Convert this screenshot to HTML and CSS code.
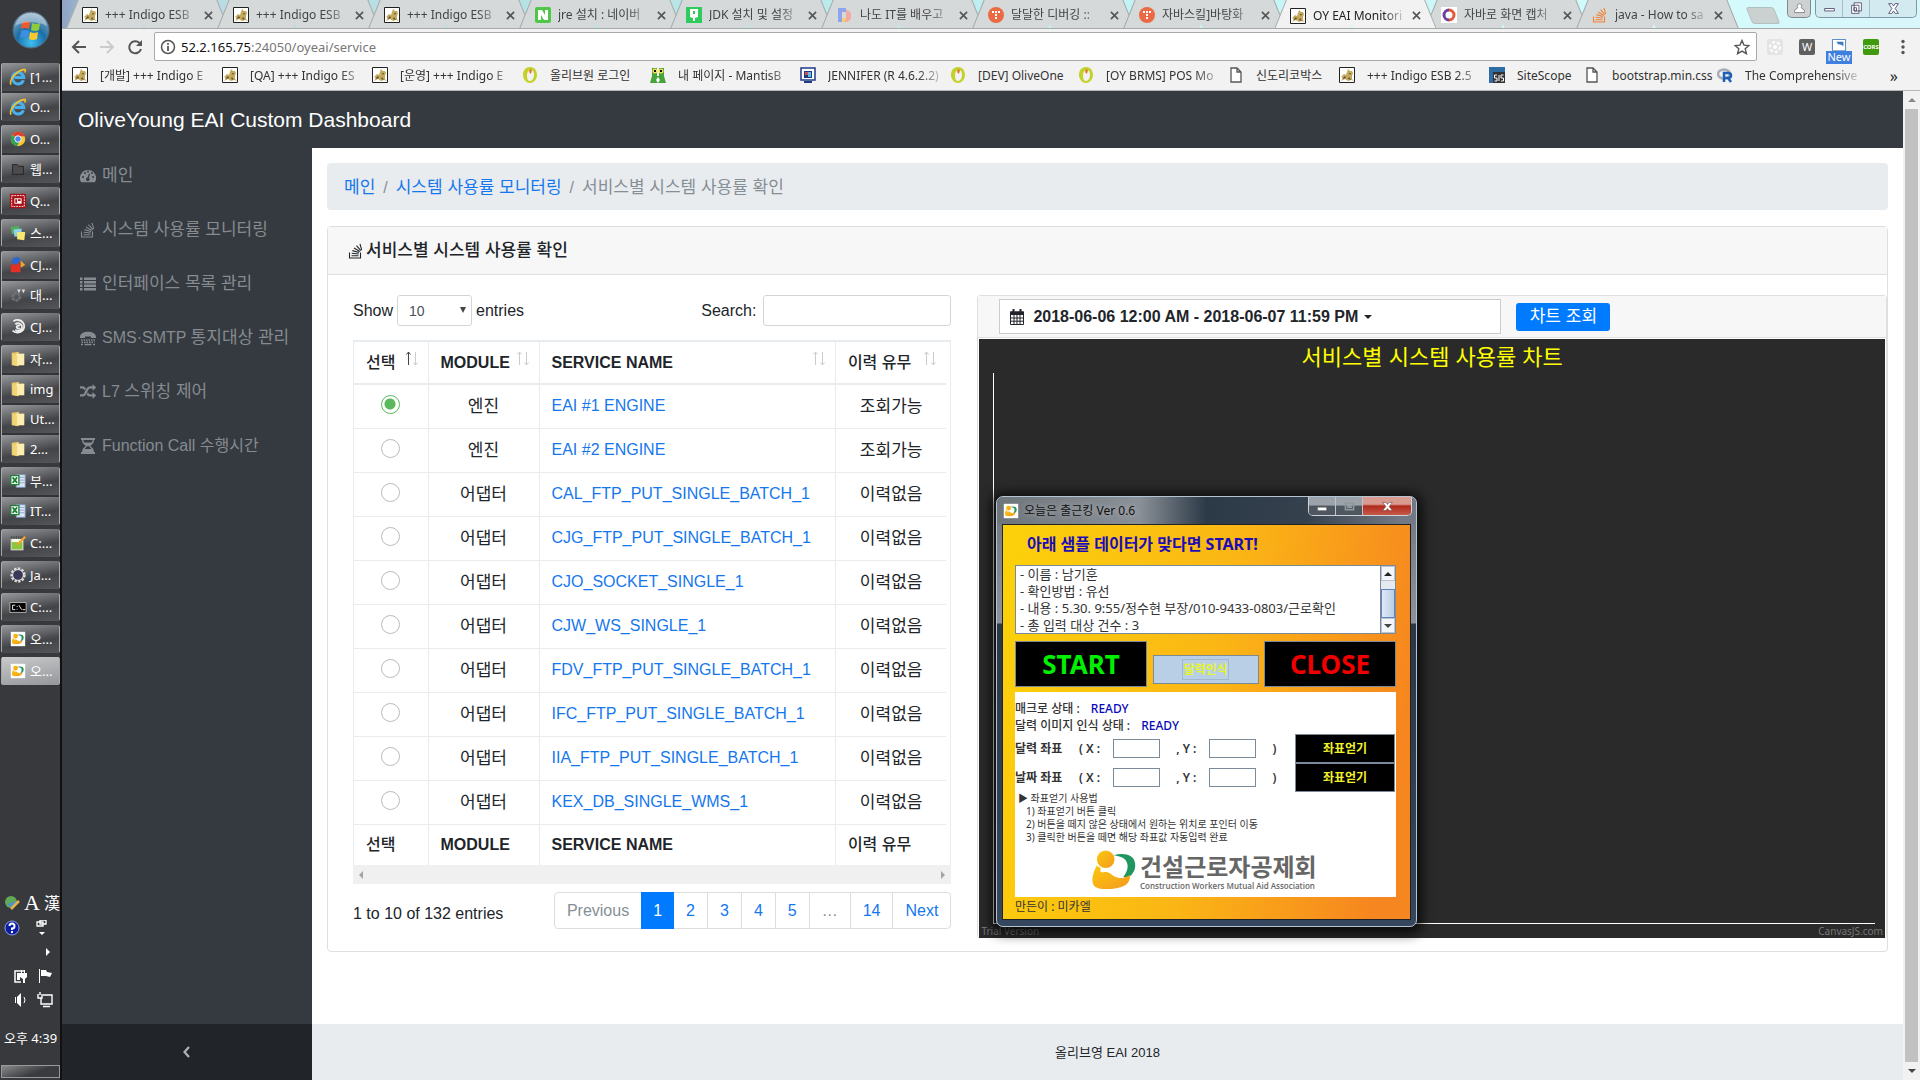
FILE: index.html
```html
<!DOCTYPE html>
<html lang="ko">
<head>
<meta charset="utf-8">
<title>OY EAI Monitoring</title>
<link rel="stylesheet" href="styles.css">
</head>
<body>
<svg class="defs" aria-hidden="true">
  <defs>
    <linearGradient id="gold" x1="0" y1="0" x2="1" y2="1"><stop offset="0" stop-color="#fcc80f"/><stop offset="1" stop-color="#f39a1d"/></linearGradient>
    <radialGradient id="orb" cx=".5" cy=".85" r=".9"><stop offset="0" stop-color="#3fc0f0"/><stop offset=".45" stop-color="#1b6fa8"/><stop offset="1" stop-color="#9fb4c4"/></radialGradient>
    <symbol id="cat" viewBox="0 0 16 16"><path fill="#fff" stroke="#222" d="M.5.5h15v15H.5z"/><path fill="#c5a95c" d="M2 14l2-3-2-1 3-3 2 1 1-3 1-3 2 2 2 0 1 2-1 3 0 3 2 2-3-1-3 1-3-2z"/><path fill="#5d5238" d="M9 4l1 2 2 0-1 2zM3 12l3-3 1 2zM10 10l2 3-3-1z"/></symbol>
    <symbol id="olive" viewBox="0 0 16 16"><path fill="#c3d22b" fill-rule="evenodd" d="M8 0c5 0 7 4 7 8s-3 8-7 8-7-4-7-8 2-8 7-8zm1 3C6 3 5 6 5 9s1 5 3 5 4-3 4-6-1-5-3-5z"/><path fill="#e8752c" d="M8 2l2 1-1 4-2-2z"/></symbol>
    <symbol id="file" viewBox="0 0 16 16"><path fill="#fff" stroke="#555" stroke-width="1.3" d="M3 1h6l4 4v10H3zM9 1v4h4"/></symbol>
    <symbol id="ts" viewBox="0 0 16 16"><circle cx="8" cy="8" r="8" fill="#eb6a43"/><path fill="#fff" d="M4 4h2v2H4zm3 0h2v2H7zm3 0h2v2h-2zM7 7h2v2H7zm0 3h2v2H7z"/></symbol>
    <symbol id="x" viewBox="0 0 10 10"><path stroke="currentColor" stroke-width="1.8" d="M1 1l8 8M9 1L1 9"/></symbol>
    <symbol id="so" viewBox="0 0 16 16"><path fill="none" stroke="currentColor" stroke-width="1.1" d="M1.500 9.500v5.500h11V9.500M3.500 12.800h7M3.700 10.200l7 .8M4.400 7.600l6.600 1.900M6 5l5.800 3.500M8.500 2.700l4.300 5M12 .800l1.700 6.400"/></symbol>
    <symbol id="ie" viewBox="0 0 20 20"><path fill="none" stroke="#47b1ee" stroke-width="3.400" d="M16 13.500A6.300 6.300 0 1 1 16.300 10.500H6"/><path fill="none" stroke="#f0c22e" stroke-width="1.800" d="M2.500 18.500C-1 16 6 4 17 1.500c2 0 1 2 .5 3.500"/></symbol>
    <symbol id="chrome" viewBox="0 0 20 20"><circle cx="10" cy="10" r="8" fill="#fcc934"/><path fill="#e0412f" d="M10 10L3.500 5.300A8 8 0 0 1 17.500 7H10z"/><path fill="#33a252" d="M10 10L3.300 5.600A8 8 0 0 0 9 18l3-6z"/><circle cx="10" cy="10" r="3.600" fill="#4b86ee" stroke="#fff"/></symbol>
    <symbol id="folder" viewBox="0 0 20 20"><path fill="#e8c766" d="M3 3l8-1v16l-8-1z"/><path fill="#fbeeb0" d="M8 4h9v13H8z"/><path fill="#f0d57b" d="M4 4l5 2v12l-5-2z"/></symbol>
    <symbol id="excel" viewBox="0 0 20 20"><path fill="#dfe7f5" stroke="#7d95be" d="M8 3h10v14H8z"/><path stroke="#87a0cc" d="M10 6h7M10 9h7M10 12h7"/><path fill="#fff" stroke="#1e8038" stroke-width="1.500" d="M2 4h9v10H2z"/><path stroke="#1e8038" stroke-width="2" d="M4 6l5 6M9 6l-5 6"/></symbol>
    <symbol id="man" viewBox="0 0 46 40"><path fill="#1f9560" d="M22 5c10-3 21-1 22 8 1 6-2 11-6 14-2 1-4 1-6 0 4-5 6-11 3-16-2-4-8-5-13-6z"/><path fill="url(#gold)" d="M5 15C1 23-2 32 3 37c6 4 22 3 30-1 4-2 6-6 6-11-7 4-13 4-17 1-3-2-4-4-9-4-5 1-5-1-4-4-2-1-4-1-4-3z"/><circle cx="14" cy="9" r="9" fill="url(#gold)"/></symbol>
    <symbol id="app" viewBox="0 0 20 20"><path fill="#fff" d="M2 2h16v16H2z"/><use href="#man" x="3" y="4" width="14" height="12"/></symbol>
    <symbol id="sort" viewBox="0 0 16 16"><path class="arrow-up" d="M4.500 14V1M2.500 3.500L4.500 1l2 2.500"/><path class="arrow-down" d="M11.500 1v13M9.500 11.500l2 2.500 2-2.500"/></symbol>
  </defs>
</svg>
<div class="desktop">
  <aside class="taskbar">
    <button class="start" aria-label="시작"><svg viewBox="0 0 38 38"><circle cx="19" cy="19" r="18" fill="url(#orb)" stroke="#54667a"/><path fill="#ef5a2c" d="M10 12q4-3 8-1l-1 7q-4-2-8 0z"/><path fill="#8fca3a" d="M20 12q4 2 8 0l-1 7q-4 2-8 0z"/><path fill="#3f8fe0" d="M9 20q4-2 8 0l-1 7q-4-2-8 0z"/><path fill="#fbc92d" d="M18 21q4 2 8 0l-1 7q-4 2-8 0z"/><path fill="#fff" opacity=".35" d="M3 15C6 5 13 2 19 2s14 3 16 13C26 10 12 10 3 15z"/></svg></button>
    <div class="group"><button><svg><use href="#ie"/></svg>[1...</button><button><svg><use href="#ie"/></svg>O...</button></div>
    <div class="group"><button><svg><use href="#chrome"/></svg>O...</button><button><svg viewBox="0 0 20 20"><path fill="#4c4c4e" stroke="#222" d="M4 5h5l2 2h5v9H4z"/></svg>웹...</button></div>
    <div class="group"><button><svg viewBox="0 0 20 20"><path fill="#a80f16" d="M1 2h18v16H1z"/><path fill="none" stroke="#fff" stroke-dasharray="2 1" d="M3 4h14v12H3z"/><path fill="#fff" d="M6 7h8v6H6z"/><path fill="#a80f16" d="M7 8h2v4H7zm3 0h3v2h-3z"/></svg>Q...</button></div>
    <div class="group"><button><svg viewBox="0 0 20 20"><path fill="#4fae5c" d="M2 3l9-1 1 8-9 1z"/><path fill="#8fd0ea" d="M5 6l9-1 0 9-8 0z"/><path fill="#f6e873" d="M9 9h9l-1 9-8-1z"/></svg>스...</button></div>
    <div class="group"><button><svg viewBox="0 0 20 20"><path fill="#2a66d6" d="M5 2q6-2 8 2l-5 6-5-3z"/><path fill="#e23024" d="M2 18V9l6 1 4-3 1 11z"/><path fill="#f3a42b" d="M13 5l5 5-5 3z"/></svg>CJ...</button><button><svg viewBox="0 0 20 20"><circle cx="8" cy="12" r="4" fill="none" stroke="#707274" stroke-width="3" stroke-dasharray="3 1"/><path fill="#ddd" d="M9 4h4l-2 4zm5 0h4l-2 4z"/></svg>대...</button></div>
    <div class="group"><button><svg viewBox="0 0 20 20"><path fill="none" stroke="#eee" stroke-width="2" d="M5 3.500A7.500 7 0 1 1 4 14M7 7a4.500 4 0 1 1 0 6M12 9a2 1.500 0 1 0 0 2"/></svg>CJ...</button></div>
    <div class="group"><button><svg><use href="#folder"/></svg>자...</button><button><svg><use href="#folder"/></svg>img</button><button><svg><use href="#folder"/></svg>Ut...</button><button><svg><use href="#folder"/></svg>2...</button></div>
    <div class="group"><button><svg><use href="#excel"/></svg>부...</button><button><svg><use href="#excel"/></svg>IT...</button></div>
    <div class="group"><button><svg viewBox="0 0 20 20"><path fill="#f5f9e8" stroke="#888" d="M2 5h14v13H2z"/><path fill="#8cc63e" d="M3 9h12v8H3z"/><path stroke="#444" stroke-dasharray="1 1" stroke-width="3" d="M2 4h14"/><path stroke="#f2a52a" stroke-width="2.500" d="M9 12l9-9"/></svg>C:...</button></div>
    <div class="group"><button><svg viewBox="0 0 20 20"><circle cx="10" cy="10" r="7" fill="none" stroke="#ddd" stroke-width="3" stroke-dasharray="2.500 1.500"/><circle cx="10" cy="10" r="6" fill="#3a3a58" stroke="#eee"/></svg>Ja...</button></div>
    <div class="group"><button><svg viewBox="0 0 20 20"><path fill="#000" stroke="#bbb" d="M1 5h18v11H1z"/><path fill="none" stroke="#fff" d="M7 8H4v5h3M9 9v1m0 2v1m2-5l3 5m1 0h3"/></svg>C:...</button></div>
    <div class="group"><button><svg><use href="#app"/></svg>오...</button></div>
    <div class="group active"><button><svg><use href="#app"/></svg>오...</button></div>
    <div class="tray">
      <div class="tray-row ime"><svg viewBox="0 0 16 16"><circle cx="7" cy="7" r="6" fill="#62a955"/><path fill="#4c93cc" d="M3 9l9-3-3 8z"/><path stroke="#e9b24a" stroke-width="2.500" d="M7 14l8-8"/></svg><span class="serif">A</span><span>漢</span></div>
      <div class="tray-row help"><svg viewBox="0 0 16 16"><circle cx="8" cy="8" r="7" fill="#0a1ba6" stroke="#8fa3dd"/><path fill="none" stroke="#fff" stroke-width="2" d="M5.500 6q0-2.500 2.500-2.500T10.500 6 8 8.500V10M8 11v2"/></svg><svg viewBox="0 0 16 16"><path fill="none" stroke="#fff" stroke-width="1.300" d="M6 0h6v4H6zM3 2h6v4H3z"/><path fill="#fff" d="M5 12h6l-3 3z"/></svg></div>
      <div class="tray-row more"><svg viewBox="0 0 16 16"><path fill="#fff" d="M6 4l4 4-4 4z"/></svg></div>
      <div class="tray-row pair"><svg viewBox="0 0 16 16"><path fill="none" stroke="#fff" stroke-width="1.500" d="M9 14H3V3h9"/><path fill="#fff" d="M5 5h3v7H5zM8 5h7v4l-2 2v4h-2v-4L8 9zM9 2h1v3H9zm3 0h1v3h-1z"/></svg><svg viewBox="0 0 16 16"><path fill="#fff" d="M2 1h1v14H2zM4 2h5l1 2 5 1-2 4-4-1H4z"/></svg></div>
      <div class="tray-row pair"><svg viewBox="0 0 16 16"><path fill="#fff" d="M3 5h1v6H3zM5 5l4-4v14l-4-4z"/><path fill="none" stroke="#fff" d="M12 5q2 3 0 6"/></svg><svg viewBox="0 0 16 16"><path fill="none" stroke="#fff" stroke-width="1.400" d="M6 3h9v9H4V6M1 2v4h4V2M3 0v3M6 14.500h7"/></svg></div>
      <time class="clock">오후 4:39</time>
      <button class="show-desktop" aria-label="바탕 화면 보기"></button>
    </div>
  </aside>

  <div class="browser">
    <div class="tabstrip">
      <div class="tab"><svg class="fav"><use href="#cat"/></svg><span>+++ Indigo ESB</span><button aria-label="닫기"><svg><use href="#x"/></svg></button></div>
      <div class="tab"><svg class="fav"><use href="#cat"/></svg><span>+++ Indigo ESB</span><button aria-label="닫기"><svg><use href="#x"/></svg></button></div>
      <div class="tab"><svg class="fav"><use href="#cat"/></svg><span>+++ Indigo ESB</span><button aria-label="닫기"><svg><use href="#x"/></svg></button></div>
      <div class="tab"><svg class="fav" viewBox="0 0 16 16"><rect width="16" height="16" rx="2" fill="#4ec748"/><path fill="#fff" d="M3 3h4l3 5V3h3v10H9L6 8v5H3z"/></svg><span>jre 설치 : 네이버</span><button aria-label="닫기"><svg><use href="#x"/></svg></button></div>
      <div class="tab"><svg class="fav" viewBox="0 0 16 16"><path fill="#2ecc5b" d="M0 0h16v16H0z"/><path fill="#fff" d="M4 2h8v8l-3 1v3H7v-3l-3-1z"/><path fill="#2ecc5b" d="M7 4h2v3H7z"/></svg><span>JDK 설치 및 설정</span><button aria-label="닫기"><svg><use href="#x"/></svg></button></div>
      <div class="tab"><svg class="fav" viewBox="0 0 16 16"><path fill="#f6cf70" d="M2 11h9v4H2z"/><path fill="#f3a8a0" d="M9 3q5 0 5 6t-6 6l1-4z"/><path fill="#8ea4ef" d="M1 1h8v4H5v10H1z"/></svg><span>나도 IT를 배우고</span><button aria-label="닫기"><svg><use href="#x"/></svg></button></div>
      <div class="tab"><svg class="fav"><use href="#ts"/></svg><span>달달한 디버깅 ::</span><button aria-label="닫기"><svg><use href="#x"/></svg></button></div>
      <div class="tab"><svg class="fav"><use href="#ts"/></svg><span>자바스킬]바탕화</span><button aria-label="닫기"><svg><use href="#x"/></svg></button></div>
      <div class="tab current"><svg class="fav"><use href="#cat"/></svg><span>OY EAI Monitori</span><button aria-label="닫기"><svg><use href="#x"/></svg></button></div>
      <div class="tab"><svg class="fav" viewBox="0 0 16 16"><path fill="#fff" d="M0 0h16v16H0z"/><path fill="none" stroke="#e8573a" stroke-width="3" d="M8 3a5 5 0 0 1 0 10"/><path fill="none" stroke="#6b3fa0" stroke-width="3" d="M8 13A5 5 0 0 1 8 3"/></svg><span>자바로 화면 캡처</span><button aria-label="닫기"><svg><use href="#x"/></svg></button></div>
      <div class="tab"><svg class="fav orange"><use href="#so"/></svg><span>java - How to sa</span><button aria-label="닫기"><svg><use href="#x"/></svg></button></div>
      <button class="new-tab" aria-label="새 탭"></button>
      <div class="win-controls">
        <button class="user" aria-label="사용자"><svg viewBox="0 0 16 16"><path fill="#fff" stroke="#777" d="M8 2a3 3 0 0 1 2 5l4 3v3H2v-3l4-3a3 3 0 0 1 2-5z"/></svg></button>
        <div class="trio"><button aria-label="최소화"><svg viewBox="0 0 16 16"><path fill="#fff" stroke="#446" d="M2 8h12v3H2z"/></svg></button><button aria-label="이전 크기로"><svg viewBox="0 0 16 16"><path fill="#fff" stroke="#446" d="M5 1h9v10H5zM2 4h9v10H2zM5 7h3v4H5z"/></svg></button><button class="wide" aria-label="닫기"><svg viewBox="0 0 16 16"><path fill="#fff" stroke="#446" d="M2 2h4l2 3 2-3h4l-4 6 4 6h-4l-2-3-2 3H2l4-6z"/></svg></button></div>
      </div>
    </div>
    <div class="toolbar">
      <button aria-label="뒤로"><svg viewBox="0 0 16 16"><path fill="none" stroke="#555" stroke-width="2" d="M15 8H2M8 2L2 8l6 6"/></svg></button>
      <button aria-label="앞으로"><svg viewBox="0 0 16 16"><path fill="none" stroke="#ccc" stroke-width="2" d="M1 8h13M8 2l6 6-6 6"/></svg></button>
      <button aria-label="새로고침"><svg viewBox="0 0 16 16"><path fill="none" stroke="#555" stroke-width="2" d="M14 10A6 6 0 1 1 12.500 4"/><path fill="#555" d="M15 1v6H9z"/></svg></button>
      <div class="omnibox"><svg viewBox="0 0 16 16"><circle cx="8" cy="8" r="6.500" fill="none" stroke="#555" stroke-width="1.500"/><path stroke="#555" stroke-width="1.800" d="M8 7v5M8 4v1.800"/></svg><span class="url"><b>52.2.165.75</b>:24050/oyeai/service</span><svg viewBox="0 0 16 16"><path fill="none" stroke="#555" stroke-width="1.400" d="M8 1.500l2 4.600 5 .4-3.800 3.300 1.200 4.900L8 12.100l-4.400 2.600 1.200-4.900L1 6.500l5-.4z"/></svg></div>
      <svg class="ext" viewBox="0 0 16 16"><path fill="#e4e4e4" d="M0 0h16v16H0z"/><circle cx="8" cy="8" r="5" fill="none" stroke="#fff" stroke-width="2" stroke-dasharray="3 2"/><circle cx="8" cy="8" r="2" fill="#fff"/></svg>
      <span class="ext gray">W</span>
      <span class="ext new"><svg viewBox="0 0 16 16"><path fill="#fff" stroke="#3c7ab8" d="M.5.5h15v13H.5z"/><path fill="#3c7ab8" d="M5 3h8v6q-1-3-6-3z"/></svg><b>New</b></span>
      <span class="ext green">CORS</span>
      <button aria-label="메뉴"><svg viewBox="0 0 16 16"><circle cx="8" cy="2.500" r="1.700" fill="#555"/><circle cx="8" cy="8" r="1.700" fill="#555"/><circle cx="8" cy="13.500" r="1.700" fill="#555"/></svg></button>
    </div>
    <nav class="bookmarks">
      <a href="#"><svg class="fav"><use href="#cat"/></svg><span>[개발] +++ Indigo E</span></a>
      <a href="#"><svg class="fav"><use href="#cat"/></svg><span>[QA] +++ Indigo ES</span></a>
      <a href="#"><svg class="fav"><use href="#cat"/></svg><span>[운영] +++ Indigo E</span></a>
      <a href="#" class="w-s"><svg class="fav"><use href="#olive"/></svg><span>올리브원 로그인</span></a>
      <a href="#"><svg class="fav" viewBox="0 0 16 16"><path fill="#46a33c" d="M2 9h12l2 7H0zM2 1h5v8H2zm7 0h5v8H9z"/><circle cx="5" cy="4" r="2.500" fill="#f4e04a"/><circle cx="11" cy="4" r="2.500" fill="#f4e04a"/><path fill="#111" d="M4 3h2v2H4zm6 0h2v2h-2z"/><path fill="#fff" d="M6 13l2-3 2 3-2 3z"/></svg><span>내 페이지 - MantisB</span></a>
      <a href="#"><svg class="fav" viewBox="0 0 16 16"><path fill="#fff" stroke="#1f3a86" stroke-width="1.500" d="M1 1h14v12H1z"/><path fill="#1f3a86" d="M4 14h8v2H4zM4 4h8v7H4z"/><path fill="#d7514a" d="M5 5h3v3H5z"/><path fill="#5bc0de" d="M8 5h3v5H8z"/></svg><span>JENNIFER (R 4.6.2.2)</span></a>
      <a href="#" class="w-s"><svg class="fav"><use href="#olive"/></svg><span>[DEV] OliveOne</span></a>
      <a href="#"><svg class="fav"><use href="#olive"/></svg><span>[OY BRMS] POS Mo</span></a>
      <a href="#" class="w-xs"><svg class="fav"><use href="#file"/></svg><span>신도리코박스</span></a>
      <a href="#"><svg class="fav"><use href="#cat"/></svg><span>+++ Indigo ESB 2.5</span></a>
      <a href="#" class="w-xxs"><svg class="fav" viewBox="0 0 16 16"><path fill="#2e6da4" d="M0 0h16v5H4v11H0z"/><path fill="#333" d="M4 5h12v11H4z"/><path fill="none" stroke="#fff" d="M8 8H5.500v3H8v3H5.500M10 8v6M14.500 8H12v3h2.500v3H12"/></svg><span>SiteScope</span></a>
      <a href="#" class="w-m"><svg class="fav"><use href="#file"/></svg><span>bootstrap.min.css</span></a>
      <a href="#" class="last"><svg class="fav" viewBox="0 0 16 16"><ellipse cx="7" cy="7" rx="6" ry="4.500" fill="none" stroke="#a9adb5" stroke-width="2.500"/><path fill="none" stroke="#1f5fb5" stroke-width="2.500" d="M7 15V6h4q3 0 3 2.500T11 11H8m3 0l3 4"/></svg><span>The Comprehensive</span></a>
      <button aria-label="북마크 더보기">»</button>
    </nav>

    <div class="viewport">
      <div class="app">
        <header class="app-head"><a href="#">OliveYoung EAI Custom Dashboard</a></header>
        <nav class="sidebar">
          <a href="#"><svg viewBox="0 0 16 16"><path fill="currentColor" fill-rule="evenodd" d="M8 2a8 8 0 0 1 6.800 12.300H1.200A8 8 0 0 1 8 2zM2 9a1 1 0 1 0 2 0 1 1 0 0 0-2 0zm2-4a1 1 0 1 0 2 0 1 1 0 0 0-2 0zm3-1.500a1 1 0 1 0 2 0 1 1 0 0 0-2 0zM12 9a1 1 0 1 0 2 0 1 1 0 0 0-2 0zm-1-4a1 1 0 1 0 2 0 1 1 0 0 0-2 0zM9 5.500L7.500 9.600a1.700 1.700 0 1 0 1.300.300L10 6z"/></svg><span class="ko">메인</span></a>
          <a href="#"><svg><use href="#so"/></svg><span class="ko">시스템 사용률 모니터링</span></a>
          <a href="#"><svg viewBox="0 0 16 16"><path fill="currentColor" d="M0 1.500h2.500V4H0zm4 0h12V4H4zM0 5h2.500v2.500H0zm4 0h12v2.500H4zM0 8.500h2.500V11H0zm4 0h12V11H4zM0 12h2.500v2.500H0zm4 0h12v2.500H4z"/></svg><span class="ko">인터페이스 목록 관리</span></a>
          <a href="#"><svg viewBox="0 0 16 16"><path fill="currentColor" d="M0 7c0-7 16-7 16 0v1h-5V6.500H5V8H0z"/><path fill="none" stroke="currentColor" stroke-width="1.500" stroke-dasharray="1.500 1" d="M1 10h14M1.500 12.300h13"/><path stroke="currentColor" stroke-width="1.500" d="M1 14.500h2m1.500 0h7m1.500 0h2"/></svg><span>SMS·SMTP <span class="ko">통지대상 관리</span></span></a>
          <a href="#"><svg viewBox="0 0 1792 1792"><path fill="currentColor" d="M666 481q-60 92-137 273-22-45-37-72.500t-40.500-63.500-51-56.500-63-35-81.500-14.500h-224q-14 0-23-9t-9-23v-192q0-14 9-23t23-9h224q250 0 410 225zm1126 799q0 14-9 23l-320 320q-9 9-23 9-13 0-22.500-9.500t-9.500-22.500v-192q-32 0-85 .5t-81 1-73-1-71-5-64-10.500-63-18.500-58-28.500-59-40-55-53.500-56-69.500q59-93 136-273 22 45 37 72.500t40.500 63.500 51 56.500 63 35 81.500 14.500h256v-192q0-14 9-23t23-9q12 0 24 10l319 319q9 9 9 23zm0-896q0 14-9 23l-320 320q-9 9-23 9-13 0-22.500-9.500t-9.500-22.500v-192h-256q-48 0-87 15t-69 45-51 61.500-45 77.500q-32 62-78 171-29 66-49.500 111t-54 105-64 100-74 83-90 68.500-106.500 42-128 16.500h-224q-14 0-23-9t-9-23v-192q0-14 9-23t23-9h224q48 0 87-15t69-45 51-61.500 45-77.500q32-62 78-171 29-66 49.500-111t54-105 64-100 74-83 90-68.500 106.500-42 128-16.500h256v-192q0-14 9-23t23-9q12 0 24 10l319 319q9 9 9 23z"/></svg><span>L7 <span class="ko">스위칭 제어</span></span></a>
          <a href="#"><svg viewBox="0 0 16 16"><path fill="currentColor" fill-rule="evenodd" d="M1 0h14v2h-1c0 3-2 5-4 6 2 1 4 3 4 6h1v2H1v-2h1c0-3 2-5 4-6-2-1-4-3-4-6H1zm2.500 2c0 1 .3 2 .8 2.500h7.400c.5-.5.8-1.500.8-2.500zm3.500 6.300L4.700 11h6.600L9 8.300z"/></svg><span>Function Call 수행시간</span></a>
          <button class="collapse" aria-label="메뉴 접기"><svg viewBox="0 0 16 16"><path fill="none" stroke="currentColor" stroke-width="2.200" d="M10 3L5.500 8l4.500 5"/></svg></button>
        </nav>
        <main class="content">
          <ol class="breadcrumb ko"><li><a href="#">메인</a></li><li><a href="#">시스템 사용률 모니터링</a></li><li>서비스별 시스템 사용률 확인</li></ol>
          <section class="card">
            <h1 class="card-head ko"><svg><use href="#so"/></svg>서비스별 시스템 사용률 확인</h1>
            <div class="card-body">
              <div class="list">
                <div class="controls">
                  <label>Show <span class="select"><select><option>10</option><option>25</option></select></span> entries</label>
                  <label>Search: <input type="search"></label>
                </div>
                <div class="table-wrap">
                  <table>
                    <colgroup><col class="c1"><col class="c2"><col class="c3"><col class="c4"></colgroup>
                    <thead><tr><th><span>선택<svg class="asc"><use href="#sort"/></svg></span></th><th><span>MODULE<svg><use href="#sort"/></svg></span></th><th><span>SERVICE NAME<svg><use href="#sort"/></svg></span></th><th><span>이력 유무<svg><use href="#sort"/></svg></span></th></tr></thead>
                    <tbody>
                      <tr><td><input type="radio" name="svc" aria-label="EAI #1 ENGINE" checked></td><td>엔진</td><td><a href="#">EAI #1 ENGINE</a></td><td>조회가능</td></tr>
                      <tr><td><input type="radio" name="svc" aria-label="EAI #2 ENGINE"></td><td>엔진</td><td><a href="#">EAI #2 ENGINE</a></td><td>조회가능</td></tr>
                      <tr><td><input type="radio" name="svc" aria-label="CAL_FTP_PUT_SINGLE_BATCH_1"></td><td>어댑터</td><td><a href="#">CAL_FTP_PUT_SINGLE_BATCH_1</a></td><td>이력없음</td></tr>
                      <tr><td><input type="radio" name="svc" aria-label="CJG_FTP_PUT_SINGLE_BATCH_1"></td><td>어댑터</td><td><a href="#">CJG_FTP_PUT_SINGLE_BATCH_1</a></td><td>이력없음</td></tr>
                      <tr><td><input type="radio" name="svc" aria-label="CJO_SOCKET_SINGLE_1"></td><td>어댑터</td><td><a href="#">CJO_SOCKET_SINGLE_1</a></td><td>이력없음</td></tr>
                      <tr><td><input type="radio" name="svc" aria-label="CJW_WS_SINGLE_1"></td><td>어댑터</td><td><a href="#">CJW_WS_SINGLE_1</a></td><td>이력없음</td></tr>
                      <tr><td><input type="radio" name="svc" aria-label="FDV_FTP_PUT_SINGLE_BATCH_1"></td><td>어댑터</td><td><a href="#">FDV_FTP_PUT_SINGLE_BATCH_1</a></td><td>이력없음</td></tr>
                      <tr><td><input type="radio" name="svc" aria-label="IFC_FTP_PUT_SINGLE_BATCH_1"></td><td>어댑터</td><td><a href="#">IFC_FTP_PUT_SINGLE_BATCH_1</a></td><td>이력없음</td></tr>
                      <tr><td><input type="radio" name="svc" aria-label="IIA_FTP_PUT_SINGLE_BATCH_1"></td><td>어댑터</td><td><a href="#">IIA_FTP_PUT_SINGLE_BATCH_1</a></td><td>이력없음</td></tr>
                      <tr><td><input type="radio" name="svc" aria-label="KEX_DB_SINGLE_WMS_1"></td><td>어댑터</td><td><a href="#">KEX_DB_SINGLE_WMS_1</a></td><td>이력없음</td></tr>
                    </tbody>
                    <tfoot><tr><th>선택</th><th>MODULE</th><th>SERVICE NAME</th><th>이력 유무</th></tr></tfoot>
                  </table>
                  <div class="hscroll"><i class="left"></i><i class="right"></i></div>
                </div>
                <div class="pager">
                  <span>1 to 10 of 132 entries</span>
                  <nav><a href="#" class="off">Previous</a><a href="#" class="on">1</a><a href="#">2</a><a href="#">3</a><a href="#">4</a><a href="#">5</a><a href="#" class="off">…</a><a href="#">14</a><a href="#">Next</a></nav>
                </div>
              </div>
              <div class="chart-card">
                <div class="chart-head">
                  <button class="range"><svg viewBox="0 0 16 16"><path fill="none" stroke="currentColor" d="M1.500 3h13v12.500h-13zM1.500 9h13M1.500 12.200h13M5 6v9M8 6v9M11 6v9"/><path fill="currentColor" d="M1 2.500h14V6H1zM3.500 0h2v4h-2zm7 0h2v4h-2z"/></svg>2018-06-06 12:00 AM - 2018-06-07 11:59 PM<i></i></button>
                  <button class="go ko">차트 조회</button>
                </div>
                <figure class="chart">
                  <figcaption>서비스별 시스템 사용률 차트</figcaption>
                  <div class="plot"></div>
                  <div class="credits"><span>Trial Version</span><a href="#">CanvasJS.com</a></div>
                </figure>
              </div>
            </div>
          </section>
        </main>
        <footer class="app-foot">올리브영 EAI 2018</footer>
      </div>
      <div class="vscroll"><i class="up"></i><span></span><i class="down"></i></div>
    </div>
  </div>

  <section class="dialog">
    <div class="title"><svg><use href="#app"/></svg><span>오늘은 출근킹 Ver 0.6</span>
      <div class="dlg-controls"><button aria-label="최소화"><svg viewBox="0 0 16 16"><path fill="#fff" stroke="#555" stroke-width=".5" d="M2 9h11v4H2z"/></svg></button><button aria-label="최대화"><svg viewBox="0 0 16 16"><path fill="none" stroke="#8f989d" stroke-width="2" d="M3 4h10v8H3zM6 7h4v2H6z"/></svg></button><button class="close" aria-label="닫기"><svg viewBox="0 0 16 16"><path fill="#fff" stroke="#644" stroke-width=".7" d="M2 3h4l2 2.500L10 3h4l-4 5 4 5h-4L8 10.500 6 13H2l4-5z"/></svg></button></div>
    </div>
    <div class="client">
      <h2>아래 샘플 데이터가 맞다면 START!</h2>
      <div class="sample">
        <div class="lines">- 이름 : 남기훈<br>- 확인방법 : 유선<br>- 내용 : 5.30. 9:55/정수현 부장/010-9433-0803/근로확인<br>- 총 입력 대상 건수 : 3</div>
        <div class="jscroll"><b><i class="up"></i></b><em></em><b><i class="down"></i></b></div>
      </div>
      <div class="actions"><button class="big green">START</button><button class="mid"><span>달력인식</span></button><button class="big red">CLOSE</button></div>
      <div class="panel">
        <p>매크로 상태 : <b>READY</b></p>
        <p>달력 이미지 인식 상태 : <b>READY</b></p>
        <div class="coord"><span class="name">달력 좌표</span><label>( X : <input type="text"></label><label>, Y : <input type="text"></label><span>)</span><button>좌표얻기</button></div>
        <div class="coord"><span class="name">날짜 좌표</span><label>( X : <input type="text"></label><label>, Y : <input type="text"></label><span>)</span><button>좌표얻기</button></div>
        <ul><li class="lead">▶ 좌표얻기 사용법</li><li>1) 좌표얻기 버튼 클릭</li><li>2) 버튼을 떼지 않은 상태에서 원하는 위치로 포인터 이동</li><li>3) 클릭한 버튼을 떼면 해당 좌표값 자동입력 완료</li></ul>
        <div class="brand"><svg><use href="#man"/></svg><div><strong>건설근로자공제회</strong><small>Construction Workers Mutual Aid Association</small></div></div>
      </div>
      <p class="made">만든이 : 미카엘</p>
    </div>
  </section>
</div>
</body>
</html>
```
FILE: styles.css
```css
* { box-sizing: border-box; }
body {
  margin: 0;
  font: 16px/24px "Liberation Sans", "Noto Sans CJK KR", sans-serif;
  color: #212529;
}
button, input, select { font: inherit; color: inherit; margin: 0; }
button { padding: 0; border: 0; background: none; cursor: pointer; }
a { color: #1577ee; text-decoration: none; }
ul, ol, p, h1, h2, figure { margin: 0; padding: 0; list-style: none; }
svg { display: block; flex: none; }
.defs { position: absolute; width: 0; height: 0; }
.ko { font-size: 17px; }

.desktop { position: relative; display: flex; min-height: 100vh; background: #fff; overflow: hidden; }

/* taskbar */
.taskbar {
  flex: none;
  width: 62px;
  display: flex;
  flex-direction: column;
  gap: 4px;
  padding-left: 1px;
  background: #37393d;
  border-right: 2px solid #111;
  color: #fff;
  font: 13px/16px "Noto Sans", "Noto Sans CJK KR", sans-serif;
}
.start { height: 59px; display: grid; place-items: center; }
.start svg { width: 38px; height: 38px; }
.group {
  display: grid;
  gap: 2px;
  border: 1px solid #a9aaad;
  border-radius: 2px;
  background: #333437;
  padding: 0;
}
.group button {
  display: flex;
  align-items: center;
  gap: 3px;
  height: 28px;
  padding-left: 7px;
  white-space: nowrap;
  background: linear-gradient(170deg, #98999b 0, #66676a 35%, #434447 60%, #55565a 100%);
}
.group button:first-child { margin-top: -1px; }
.group button:last-child { margin-bottom: -1px; }
.group svg { width: 18px; height: 18px; }
.group.active button { background: linear-gradient(170deg, #c9cacb, #95969a); }
.tray { margin-top: auto; display: flex; flex-direction: column; gap: 8px; }
.tray-row { display: flex; align-items: center; height: 16px; padding-left: 3px; }
.tray-row svg { width: 16px; height: 16px; }
.ime { gap: 4px; font-size: 16px; margin-bottom: 1px; }
.serif { font: 22px/16px "Liberation Serif", serif; }
.help { gap: 14px; }
.more { padding-left: 39px; }
.pair { gap: 9px; padding-left: 11px; }
.clock { padding: 14px 0 11px 3px; white-space: nowrap; line-height: 16px; }
.show-desktop { height: 13px; margin-bottom: 2px; border: 1px solid #999; background: linear-gradient(160deg, #8a8b8d, #3a3b3e 60%); }

/* browser chrome */
.browser { flex: 1; min-width: 0; display: flex; flex-direction: column; background: #f2f2f2; font-size: 12px; }
.tabstrip {
  height: 29px;
  display: flex;
  padding-left: 10px;
  border-bottom: 1px solid #a5abab;
  background: linear-gradient(90deg, #8ea3c6 0, #bcd9e2 3%, #b5e2e4 25%, #c2f4f6 60%, #d4fbfc 88%, #d9f6fb 100%);
  font: 12px/16px "Noto Sans", "Noto Sans CJK KR", sans-serif;
  color: #444;
  overflow: hidden;
}
.tab { position: relative; z-index: 0; flex: 0 1 151px; min-width: 0; display: flex; align-items: center; padding: 2px 7px 0 10px; }
.tab::before, .tab::after {
  content: "";
  position: absolute;
  z-index: -1;
  top: 0;
  bottom: 0;
  background: #d5d9d9;
}
.tab::before { left: 0; right: 50%; transform: skewX(-22deg); border-left: 1px solid #9fa8a8; }
.tab::after { left: 45%; right: 0; transform: skewX(22deg); border-right: 1px solid #9fa8a8; }
.tab.current { z-index: 1; margin-bottom: -1px; color: #222; }
.tab.current::before, .tab.current::after { background: #f2f2f2; }
.fav { width: 16px; height: 16px; }
.orange { color: #ef8236; }
.tab span { flex: 1; min-width: 0; margin: 0 2px 0 7px; overflow: hidden; white-space: nowrap; -webkit-mask: linear-gradient(90deg, #000 75%, transparent); mask: linear-gradient(90deg, #000 75%, transparent); }
.tab button { color: #555; padding: 3px; }
.tab button svg { width: 9px; height: 9px; }
.new-tab { width: 28px; height: 17px; margin: 7px 0 0 16px; background: #cbd0d1; border: 1px solid #b3c0c0; border-radius: 3px; transform: skewX(22deg); }
.win-controls { margin-left: auto; display: flex; gap: 4px; height: 18px; padding-right: 3px; }
.win-controls svg { width: 13px; height: 13px; }
.user { width: 24px; display: grid; place-items: center; border: 1px solid #7f8a8d; border-top: 0; border-radius: 0 0 5px 5px; background: #cdd1d2; }
.trio { display: flex; border: 1px solid #7b99a8; border-top: 0; border-radius: 0 0 5px 5px; background: #d3eaf1; }
.trio button { width: 27px; display: grid; place-items: center; border-right: 1px solid #a5bfca; }
.trio .wide { width: 46px; border: 0; }

.toolbar { height: 33px; display: flex; align-items: center; padding: 2px 9px 0 9px; }
.toolbar button { width: 16px; margin-right: 12px; }
.toolbar button svg, .omnibox svg { width: 16px; height: 16px; }
.omnibox { flex: 1; height: 29px; display: flex; align-items: center; padding: 0 6px 0 5px; margin: 0 10px 0 -1px; border: 1px solid #a9a9a9; border-radius: 2px; background: #fff; font: 13px/20px "Noto Sans", sans-serif; color: #777; }
.url { flex: 1; margin-left: 5px; }
.url b { font-weight: 400; color: #111; }
.ext { width: 16px; height: 16px; margin-right: 16px; border-radius: 2px; font: 11px/16px "Noto Sans", sans-serif; text-align: center; color: #fff; }
.gray { background: #606060; }
.green { background: #3f9a0c; font-size: 6px; font-weight: 700; }
.new { position: relative; }
.new svg { width: 16px; height: 14px; }
.new b { position: absolute; left: -5px; top: 12px; width: 26px; height: 13px; background: #3f7fe0; font-size: 11px; line-height: 12px; font-weight: 400; }
.toolbar button:last-child { margin-right: 0; }

.bookmarks { height: 29px; display: flex; align-items: center; padding-left: 10px; border-bottom: 1px solid #b6b6b6; font: 12px/18px "Noto Sans", "Noto Sans CJK KR", sans-serif; overflow: hidden; }
.bookmarks a { flex: 0 0 150px; min-width: 0; display: flex; gap: 12px; color: #333; }
.bookmarks span { flex: 1; min-width: 0; margin-right: 3px; white-space: nowrap; -webkit-mask: linear-gradient(90deg, #000 75%, transparent); mask: linear-gradient(90deg, #000 75%, transparent); }
.bookmarks .w-s { flex-basis: 128px; }
.bookmarks .w-m { flex-basis: 133px; }
.bookmarks .w-xs { flex-basis: 111px; }
.bookmarks .w-xxs { flex-basis: 95px; }
.bookmarks .w-s span, .bookmarks .w-xs span, .bookmarks .w-xxs span, .bookmarks .w-m span { -webkit-mask: none; mask: none; margin-right: 0; }
.bookmarks button { margin: 0 22px 0 auto; font-size: 16px; }

/* page */
.viewport { flex: 1; display: flex; font-size: 16px; }
.app {
  flex: 1;
  min-width: 0;
  display: grid;
  grid-template: 57px 1fr 56px / 250px 1fr;
  background: #fff;
}
.app-head { grid-column: 1 / 3; display: flex; align-items: center; padding: 0 16px; background: #343a40; font-size: 21px; }
.app-head a { color: #fff; }
.sidebar { grid-row: 2 / 4; display: flex; flex-direction: column; background: #343a40; }
.sidebar a { display: flex; align-items: center; gap: 6px; height: 54px; padding: 1px 0 0 18px; color: #868b90; white-space: nowrap; }
.sidebar svg { width: 16px; height: 16px; }
.collapse { height: 56px; margin-top: auto; display: grid; place-items: center; background: #212529; color: #b0b3b6; }
.content { padding: 15px 15px 30px; min-width: 0; }
.breadcrumb { display: flex; height: 47px; align-items: center; padding: 2px 17px 0; border-radius: 4px; background: #e9ecef; color: #868e96; }
.breadcrumb li + li::before { content: "/"; margin: 0 8px; font-size: 16px; }
.card { margin-top: 16px; border: 1px solid #dfdfdf; border-radius: 4px; }
.card-head { display: flex; align-items: center; gap: 2px; height: 48px; padding-left: 20px; background: #f7f7f7; border-bottom: 1px solid #dfdfdf; font-weight: 500; }
.card-head svg { width: 16px; height: 16px; }
.card-body { display: grid; grid-template-columns: 598fr 909fr; gap: 26px; padding: 20px 0 12px 25px; }
.list { min-width: 0; }
.controls { display: flex; justify-content: space-between; height: 31px; margin-bottom: 14px; }
.controls label { display: flex; align-items: center; gap: 4px; }
.controls label + label { gap: 7px; }
.select { position: relative; }
.select::after { content: ""; position: absolute; right: 6px; top: 12px; border: 3px solid transparent; border-top: 6px solid #444; border-bottom: 0; }
.select select { width: 75px; height: 31px; padding: 0 11px; border: 1px solid #d3d6d9; border-radius: 3px; background: #fff; appearance: none; font-size: 14px; color: #495057; }
.controls input { width: 188px; height: 31px; border: 1px solid #d3d6d9; border-radius: 3px; background: #fff; padding: 0 8px; }
.table-wrap { border: 1px solid #e9ecef; border-top-width: 2px; border-bottom: 0; }
table { width: calc(100% - 4px); table-layout: fixed; border-collapse: collapse; }
.c1 { width: 74px; }
.c2 { width: 111px; }
.c4 { width: 111px; }
th, td { height: 44px; padding: 0 12px; border: 1px solid #e9ecef; border-left: 0; text-align: center; white-space: nowrap; }
th:last-child, td:last-child { border-right: 0; }
th { text-align: left; }
thead th { height: 42px; border-top: 0; border-bottom: 2px solid #e9ecef; padding-right: 8px; }
thead span { display: flex; justify-content: space-between; }
thead svg { width: 16px; height: 16px; --up: #ccc; }
thead .asc { --up: #444; }
.arrow-up, .arrow-down { fill: none; stroke: #ccc; }
.arrow-up { stroke: var(--up); }
tfoot th { height: 41px; border-bottom: 0; }
th:first-child, th:last-child { font-weight: 500; }
td:nth-child(2), td:last-child { font-size: 17px; padding-top: 2px; }
td:nth-child(3) { text-align: left; }
td input { display: block; margin: -4px auto 0; width: 19px; height: 19px; border: 1px solid #bbb; border-radius: 50%; background: #fff; appearance: none; }
td input:checked { border-color: #5cb85c; background: radial-gradient(circle at 8px 8px, #5cb85c 5px, transparent 6px); }
.hscroll { display: flex; justify-content: space-between; align-items: center; height: 19px; margin: 0 -1px; padding: 0 6px; background: #f0f0f0; }
.left, .right, .up, .down { width: 0; height: 0; border: 4px solid transparent; }
.left { border-right-color: #a3a3a3; border-left: 0; }
.right { border-left-color: #a3a3a3; border-right: 0; }
.up { border-bottom-color: #888; border-top: 0; }
.down { border-top-color: #444; border-bottom: 0; }
.pager { display: flex; justify-content: space-between; padding-top: 8px; }
.pager > span { padding-top: 10px; }
.pager nav { display: flex; height: 37px; border: 1px solid #ddd; border-radius: 4px; }
.pager nav a { padding: 6px 12px; border-left: 1px solid #ddd; }
.pager nav a:first-child { border: 0; }
.pager nav .off { color: #868e96; }
.pager nav .on { margin: -1px 0; padding: 7px 12px; background: #007bff; border: 0; color: #fff; }
.pager nav .on + a { border: 0; }

.chart-card { min-width: 0; border: 1px solid #dfdfdf; border-bottom: 0; border-radius: 4px; }
.chart-head { display: flex; align-items: center; gap: 15px; height: 42px; padding-left: 21px; background: #f7f7f7; border-bottom: 1px solid #dfdfdf; }
.range { flex: 0 1 502px; display: flex; align-items: center; gap: 8px; height: 35px; padding-left: 9px; border: 1px solid #ccc; background: #fff; font-weight: 700; white-space: nowrap; }
.range svg { width: 16px; height: 16px; }
.range i { border: 4px solid transparent; border-top-color: #212529; border-bottom: 0; margin-left: -2px; }
.go { width: 94px; height: 28px; border-radius: 3px; background: #007bff; color: #fff; }
.chart { display: flex; flex-direction: column; height: 599px; margin: 1px; background: #2a2a2a; }
figcaption { padding-top: 5px; height: 34px; text-align: center; font-size: 22px; line-height: 28px; color: #ff0; }
.plot { flex: 1; margin: 0 10px 0 14px; border-left: 1px solid #fff; border-bottom: 1px solid #fff; }
.credits { display: flex; justify-content: space-between; padding: 0 2px; font: 10px/14px "Noto Sans", sans-serif; color: #777; }
.credits a { color: #777; }
.app-foot { background: #e9ecef; text-align: center; font-size: 13px; line-height: 57px; }
.vscroll { width: 17px; display: flex; flex-direction: column; align-items: center; gap: 7px; padding: 7px 2px; background: #f1f1f1; }
.vscroll span { flex: 1; align-self: stretch; background: #c1c1c1; }

/* floating desktop window */
.dialog {
  position: absolute;
  left: 996px;
  top: 496px;
  width: 421px;
  padding: 0 5px 6px;
  border: 1px solid #b5c4d3;
  border-radius: 7px;
  background: linear-gradient(#6f757f 0, #8e929c 126px, #2b3745 127px, #35475e);
  box-shadow: 0 2px 12px 5px #000b;
  font: 12px/17px "Noto Sans", "Noto Sans CJK KR", sans-serif;
  color: #333;
}
.title { display: flex; align-items: center; gap: 4px; height: 27px; margin: 0 -5px; padding-left: 5px; border-radius: 6px 6px 0 0; background: linear-gradient(90deg, #6e757b 0, #8a9097 34%, #2c3947 50%, #35414d 74%, #727984 96%); color: #111; }
.title svg { width: 18px; height: 18px; }
.title > span { text-shadow: 0 0 6px #fff8; }
.dlg-controls { align-self: flex-start; display: flex; margin: 0 4px 0 auto; border: 1px solid #ccd2d8; border-top: 0; border-radius: 0 0 5px 5px; overflow: hidden; }
.dlg-controls button { width: 27px; height: 18px; display: grid; place-items: center; border-right: 1px solid #bcc4ca; background: linear-gradient(#9ca2a9 45%, #4e565f 50%); }
.dlg-controls svg { width: 13px; height: 13px; }
.dlg-controls .close { width: 48px; border: 0; background: linear-gradient(#d99a90 40%, #b02a1c 50%, #c65a4a); }
.client { border: 1px solid #222; background: linear-gradient(100deg, #fcd20a, #fbb615 50%, #f6861f 92%); padding: 7px 14px 2px 12px; }
.client h2 { padding-left: 12px; font-size: 16px; line-height: 24px; color: #1c0cb8; white-space: nowrap; }
.sample { display: flex; height: 69px; margin-top: 9px; border: 1px solid #7a8a99; background: #fff; overflow: hidden; }
.lines { flex: 1; padding-left: 4px; font-size: 13px; white-space: nowrap; }
.jscroll { width: 15px; display: flex; flex-direction: column; align-items: stretch; border-left: 1px solid #7a8a99; background: #e4eaf0; }
.jscroll b { height: 15px; display: grid; place-items: center; background: #f3f5f8; border: 1px solid #b8c4d0; }
.jscroll em { flex: 1; margin-top: 8px; border: 1px solid #6382bf; background: linear-gradient(90deg, #dfe9f5, #b8cfe5); }
.jscroll .up { border-bottom-color: #222; }
.actions { display: flex; align-items: flex-end; justify-content: space-between; margin: 7px 0 5px; }
.actions button { border: 1px solid #7a8a99; }
.big { width: 132px; height: 46px; background: #000; font-size: 26px; font-weight: 700; line-height: 40px; }
.actions .green { color: #00f000; background: #000; }
.red { color: #f00000; }
.mid { width: 106px; height: 29px; margin-bottom: 3px; background: #b8cfe5; color: #e6f52a; font-weight: 700; line-height: 19px; }
.mid span { display: inline-block; border: 1px solid #a3b8cc; }
.panel { height: 205px; padding-top: 8px; background: #fff; font-weight: 500; }
.panel p b { margin-left: 8px; font-weight: 500; color: #0a0ab8; }
.coord { display: flex; align-items: center; gap: 12px; height: 29px; font-weight: 600; }
.name { width: 52px; white-space: nowrap; }
.coord label { display: flex; align-items: center; gap: 10px; white-space: pre; }
.coord label + label { margin-left: 4px; }
.coord input { width: 47px; height: 19px; border: 1px solid #7a8a99; background: #fff; padding: 0 2px; }
.coord label + span { margin-left: 4px; }
.coord button { width: 100px; height: 29px; margin: 0 1px 0 auto; border: 1px solid #7a8a99; background: #000; color: #f2f22a; font-weight: 700; }
.panel ul { padding: 0 0 0 11px; font-size: 10px; line-height: 13px; font-weight: 400; white-space: nowrap; }
.panel .lead { margin-left: -8px; }
.brand { display: flex; gap: 3px; padding: 6px 0 0 77px; color: #666; white-space: nowrap; }
.brand svg { width: 45px; height: 40px; }
.brand strong { display: block; padding-top: 3px; font: 700 24px/26px "Noto Sans CJK KR", sans-serif; }
.brand small { display: block; font: 600 8px/14px "Open Sans", sans-serif; }
.made { font-size: 12px; line-height: 20px; }
```
